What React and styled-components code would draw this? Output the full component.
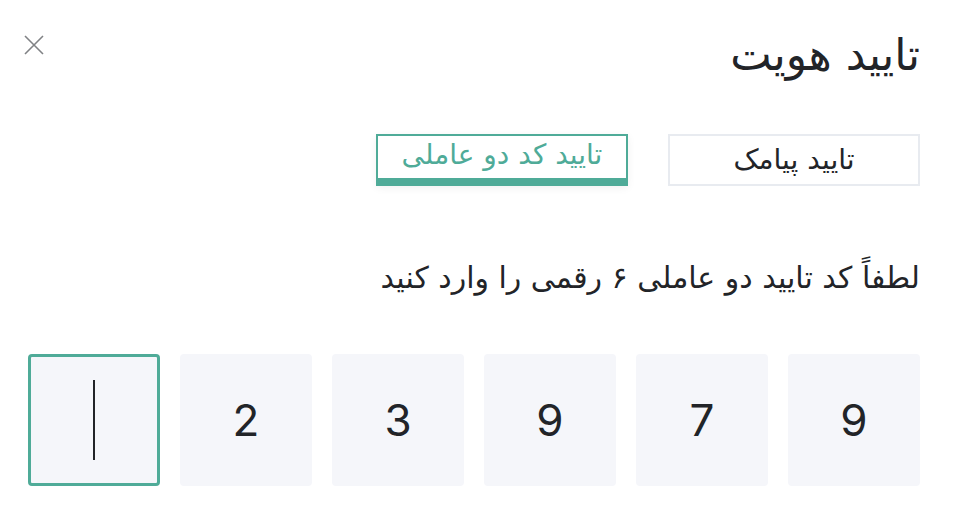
import React from 'react'
import styled, { createGlobalStyle } from 'styled-components'

const GlobalStyle = createGlobalStyle`
  html, body {
    margin: 0;
    background: #ffffff;
  }
  body {
    font-family: "DejaVu Sans", "Noto Sans", sans-serif;
    color: #222428;
  }
`

const Dialog = styled.div`
  width: 956px;
  height: 518px;
  box-sizing: border-box;
  padding: 0 36px 0 28px;
  direction: rtl;
`

const Header = styled.div`
  display: flex;
  justify-content: space-between;
  align-items: flex-start;
  height: 110px;
  padding-top: 27px;
  box-sizing: border-box;
`

const Title = styled.h2`
  margin: 0;
  font-size: 44px;
  font-weight: 400;
  line-height: 56px;
  color: #222428;
`

const CloseButton = styled.button`
  border: none;
  background: none;
  padding: 0;
  margin: 6px 0 0 -6px;
  width: 24px;
  height: 24px;
  color: #808285;
  cursor: pointer;
  display: flex;
  align-items: center;
  justify-content: center;
`

const Tabs = styled.div`
  display: flex;
  gap: 40px;
  margin-top: 24px;
`

const Tab = styled.button`
  width: 252px;
  height: 52px;
  box-sizing: border-box;
  background: #fff;
  font-family: "DejaVu Sans", sans-serif;
  font-size: 28px;
  line-height: 1;
  padding: 0 0 ${p => (p.active ? '4px' : '0')};
  border: ${p => (p.active ? '2px solid #4fab98' : '2px solid #e8ebf0')};
  border-bottom-width: ${p => (p.active ? '8px' : '2px')};
  color: ${p => (p.active ? '#4fab98' : '#222428')};
  box-shadow: ${p => (p.active ? '0 2px 8px rgba(0,0,0,0.06)' : 'none')};
  direction: rtl;
`

const Prompt = styled.p`
  margin: 70px 0 0;
  font-size: 30px;
  line-height: 44px;
  color: #222428;
`

const Inputs = styled.div`
  display: flex;
  gap: 20px;
  margin-top: 54px;
`

const Digit = styled.div`
  width: 132px;
  height: 132px;
  box-sizing: border-box;
  border-radius: 4px;
  background: #f5f6fa;
  border: 3px solid ${p => (p.focused ? '#4fab98' : 'transparent')};
  display: flex;
  align-items: center;
  justify-content: center;
  font-family: "Inter", "Roboto", sans-serif;
  font-size: 44px;
  color: #222428;
`

const Caret = styled.span`
  display: block;
  width: 2px;
  height: 80px;
  background: #222428;
`

const code = ['9', '7', '9', '3', '2', '']

export default function App() {
  return (
    <>
      <GlobalStyle />
      <Dialog>
        <Header>
          <Title>تایید هویت</Title>
          <CloseButton aria-label="close">
            <svg width="22" height="22" viewBox="0 0 22 22" fill="none" stroke="currentColor" strokeWidth="1.6">
              <path d="M2 2 L20 20 M20 2 L2 20" />
            </svg>
          </CloseButton>
        </Header>
        <Tabs>
          <Tab>تایید پیامک</Tab>
          <Tab active>تایید کد دو عاملی</Tab>
        </Tabs>
        <Prompt>لطفاً کد تایید دو عاملی ۶ رقمی را وارد کنید</Prompt>
        <Inputs>
          {code.map((d, i) => (
            <Digit key={i} focused={d === ''}>
              {d === '' ? <Caret /> : d}
            </Digit>
          ))}
        </Inputs>
      </Dialog>
    </>
  )
}
